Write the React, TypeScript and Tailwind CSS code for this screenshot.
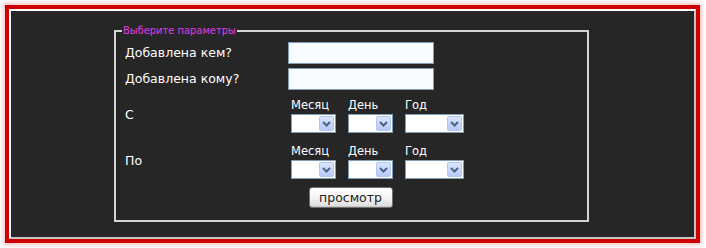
import React from "react";

function Chevron() {
  return (
    <svg width="9" height="6" viewBox="0 0 9 6" className="block">
      <path d="M1 1 L4.5 4.5 L8 1" stroke="#4d6185" strokeWidth="2" fill="none" />
    </svg>
  );
}

function Select({ w }: { w: string }) {
  return (
    <div className={`${w} h-[19px] bg-white border border-[#7f9db9] flex justify-end items-center pr-[1px]`}>
      <div className="w-[15px] h-[15px] rounded-[2px] bg-gradient-to-b from-[#dae6fe] to-[#b7cbf8] border border-[#b2c6f2] flex items-center justify-center">
        <Chevron />
      </div>
    </div>
  );
}

function DateRow() {
  return (
    <div className="flex flex-col gap-[2px] pl-[3px]">
      <div className="flex text-[11.5px] leading-[14px] text-white">
        <div className="w-[57px]">Месяц</div>
        <div className="w-[57px]">День</div>
        <div className="w-[59px]">Год</div>
      </div>
      <div className="flex">
        <div className="w-[57px]"><Select w="w-[45px]" /></div>
        <div className="w-[57px]"><Select w="w-[45px]" /></div>
        <div className="w-[59px]"><Select w="w-[59px]" /></div>
      </div>
    </div>
  );
}

export default function App() {
  return (
    <div
      className="w-[706px] h-[248px] bg-white pt-[5px] pl-[5px] pr-[6px] pb-[5px]"
      style={{ fontFamily: '"DejaVu Sans", Verdana, sans-serif' }}
    >
      <div className="h-full border-4 border-[#d00000] shadow-[0_0_4px_2px_rgba(230,60,60,0.3)]">
        <div className="h-full border-2 border-t-white border-l-white border-r-[#c4c4c4] border-b-[#c4c4c4] bg-[#262626] pl-[103px] pt-[13px]">
          <fieldset className="w-[475px] border-2 border-[#d4d4d4] pt-[5px] pb-[12px]">
            <legend
              className="ml-[6px] px-[1px] text-[11px] leading-[13px] text-[#e23ce2]"
              style={{ fontFamily: '"DejaVu Sans Condensed", "DejaVu Sans", sans-serif', fontStretch: "condensed" }}
            >
              Выберите параметры
            </legend>
            <div className="pl-[9px] grid grid-cols-[163px_1fr] items-center text-[12.5px] text-white">
              <div>Добавлена кем?</div>
              <div className="w-[146px] h-[22px] bg-[#f8fbff] border border-[#7f9db9]" />
              <div className="mt-[4px]">Добавлена кому?</div>
              <div className="mt-[4px] w-[146px] h-[22px] bg-[#f8fbff] border border-[#7f9db9]" />
              <div className="mt-[8px]">С</div>
              <div className="mt-[8px]"><DateRow /></div>
              <div className="mt-[11px]">По</div>
              <div className="mt-[11px]"><DateRow /></div>
            </div>
            <div className="flex justify-center mt-[8px] pr-[2px]">
              <button className="w-[84px] h-[21px] rounded-[3px] border border-[#707070] bg-gradient-to-b from-white via-[#f4f4f4] to-[#dcdcdc] text-[12.5px] leading-[18px] text-[#222] shadow-[inset_0_-1px_0_#c8c8c8]">
                просмотр
              </button>
            </div>
          </fieldset>
        </div>
      </div>
    </div>
  );
}
